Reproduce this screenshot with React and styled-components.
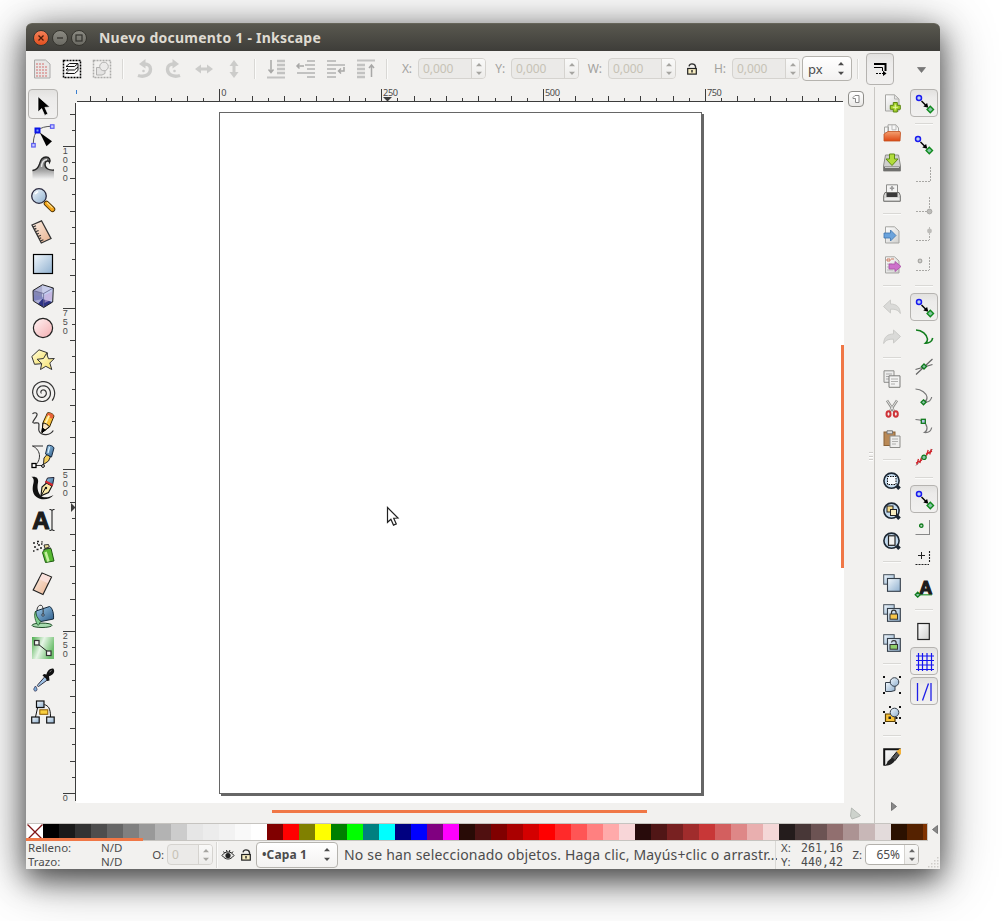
import React from "react";
import styled, { createGlobalStyle, css } from "styled-components";

const Global = createGlobalStyle`
  * { box-sizing: border-box; }
  html, body { margin: 0; padding: 0; background: #fff; }
  body { font-family: "Noto Sans", "Open Sans", sans-serif; color: #4c4c4c; overflow: hidden; }
  svg { display: block; flex: none; overflow: visible; }
`;

const Desktop = styled.main`
  width: 1003px;
  height: 921px;
  padding: 23px 0 0 26px;
  background: #fff;
  overflow: hidden;
`;

const Window = styled.section`
  width: 914px;
  height: 846px;
  display: flex;
  flex-direction: column;
  background: #f2f1ef;
  border-radius: 6px 6px 0 0;
  box-shadow: 0 10px 28px rgba(0, 0, 0, 0.6), 0 8px 56px rgba(0, 0, 0, 0.42);
`;

/* ---------- title bar ---------- */

const TitleBar = styled.header`
  height: 28px;
  flex: none;
  display: flex;
  align-items: center;
  gap: 3px;
  padding-left: 7px;
  border-radius: 6px 6px 0 0;
  background: linear-gradient(#59584f, #3e3d39);
  border-top: 1px solid #66655a;
`;

const WindowButton = styled.span`
  width: 16px;
  height: 16px;
  border-radius: 50%;
  border: 1px solid #36352f;
  background: ${(p) => (p.$close ? "linear-gradient(#f58058, #e2501f)" : "linear-gradient(#8b8a82, #6b6a63)")};
`;

const Title = styled.h1`
  margin: 0 0 0 9px;
  font-size: 14px;
  line-height: 26px;
  font-weight: 700;
  letter-spacing: 0.24px;
  color: #dfdbd2;
  white-space: nowrap;
`;

/* ---------- tool controls bar ---------- */

const ControlBar = styled.div`
  height: 36px;
  flex: none;
  display: flex;
  align-items: center;
  padding: 0 0 1px 1px;
`;

const IconSlot = styled.span`
  width: 30px;
  height: 30px;
  flex: none;
  display: flex;
  align-items: center;
  justify-content: center;
  opacity: ${(p) => p.$fade || 1};
`;

const VSep = styled.i`
  width: 2px;
  height: ${(p) => p.$h || 20}px;
  margin: 0 ${(p) => (p.$tight ? 3 : 5)}px 0 ${(p) => (p.$tight ? 3 : 5)}px;
  flex: none;
  background: linear-gradient(90deg, #d9d8d5 50%, #fbfbfa 50%);
`;

const FieldLabel = styled.label`
  width: ${(p) => p.$w}px;
  padding-right: 6px;
  flex: none;
  text-align: right;
  font-size: 12px;
  letter-spacing: -0.1px;
  color: ${(p) => (p.$on ? "#4c4c4c" : "#a3a29e")};
  white-space: nowrap;
`;

const StatusLabel = styled(FieldLabel)`
  padding-right: 3px;
  font-size: 11.5px;
`;

const SpinBox = styled.span`
  width: ${(p) => p.$w}px;
  height: 21px;
  flex: none;
  display: flex;
  overflow: hidden;
  border-radius: 4px;
  border: 1px solid ${(p) => (p.$on ? "#b3b1ac" : "#d5d3cf")};
  background: ${(p) => (p.$on ? "#fff" : "#ebeae8")};
  color: ${(p) => (p.$on ? "#4c4c4c" : "#c6c2b5")};
  font-size: 12px;
`;

const SpinValue = styled.span`
  flex: 1;
  display: flex;
  align-items: center;
  padding: 0 4px;
  letter-spacing: -0.1px;
  justify-content: ${(p) => (p.$end ? "flex-end" : "flex-start")};
`;

const SpinButtons = styled.span`
  width: 14px;
  display: flex;
  align-items: center;
  justify-content: center;
  border-left: 1px solid #d5d3cf;
  background: linear-gradient(#f9f9f8, #edecea);
  color: ${(p) => (p.$on ? "#666" : "#a6a5a1")};
`;

const Combo = styled.span`
  width: ${(p) => p.$w}px;
  height: ${(p) => p.$h}px;
  margin-left: ${(p) => p.$gap || 0}px;
  flex: none;
  display: flex;
  align-items: center;
  justify-content: space-between;
  padding: 0 7px 0 5px;
  border: 1px solid #b5b3ae;
  border-radius: 4px;
  background: linear-gradient(#fff, #f3f2f1);
  font-size: 13px;
  color: #4c4c4c;
`;

const pressed = css`
  border: 1px solid #b5b3b0;
  border-radius: 4px;
  background: linear-gradient(#e2e1df, #ecebea 30%, #f1f0ef);
`;

const ToggleButton = styled.span`
  width: ${(p) => p.$w}px;
  height: ${(p) => p.$h}px;
  flex: none;
  display: flex;
  align-items: center;
  justify-content: center;
  ${(p) => p.$pressed && pressed}
`;

const ScaleButton = styled(ToggleButton)`
  margin-left: 2px;
`;

const Overflow = styled.span`
  margin-left: auto;
  padding: 3px 14px 0 0;
`;

/* ---------- body ---------- */

const Body = styled.div`
  height: 736px;
  flex: none;
  display: flex;
`;

const Toolbox = styled.nav`
  width: 35px;
  flex: none;
  padding: 2px 0 0 2px;
  display: flex;
  flex-direction: column;
  gap: 2px;
`;

const Workspace = styled.div`
  flex: none;
  display: grid;
  grid-template-columns: 15px 768px 30px;
  grid-template-rows: 15px 701px 20px;
`;

const RulerTop = styled.div`
  grid-column: 1 / 3;
`;

const RulerLeft = styled.div`
  grid-column: 1;
  grid-row: 2;
`;

const RulerSvg = styled.svg`
  fill: #4c4c4c;
`;

const RulerText = styled.text`
  font-family: ${(p) => (p.$stacked ? '"Liberation Sans"' : '"Noto Sans"')}, sans-serif;
  font-size: ${(p) => (p.$stacked ? 9 : 9.2)}px;
  letter-spacing: ${(p) => (p.$stacked ? 0 : -0.4)}px;
`;

const Canvas = styled.div`
  grid-column: 2;
  grid-row: 2;
  position: relative;
  overflow: hidden;
  background: #fff;
`;

const Sheet = styled.div`
  position: absolute;
  left: 143px;
  top: 10px;
  width: 483px;
  height: 682px;
  border: 1px solid #666;
  background: #fff;
  box-shadow: 2px 2px 0 #666;
`;

const Pointer = styled.div`
  position: absolute;
  left: 310px;
  top: 404px;
`;

const VThumb = styled.div`
  position: absolute;
  right: 0;
  top: 243px;
  width: 3px;
  height: 223px;
  background: #f07746;
`;

const HScroll = styled.div`
  grid-column: 2;
  grid-row: 3;
  padding: 7px 0 0 196px;
`;

const HThumb = styled.div`
  width: 375px;
  height: 3px;
  background: #f07746;
`;

const SideStrip = styled.div`
  grid-column: 3;
  grid-row: 1 / 4;
  display: flex;
  flex-direction: column;
  justify-content: space-between;
  padding: 4px 0 3px 4px;
`;

const MiniButton = styled.span`
  width: 16px;
  height: 16px;
  display: flex;
  align-items: center;
  justify-content: center;
  border: 1px solid #8f8e8a;
  border-radius: 4px;
  background: linear-gradient(#fff, #e9e8e6);
`;

const Grip = styled.span`
  width: 4px;
  height: 9px;
  align-self: flex-end;
  margin-right: 1px;
  margin-top: -1px;
  background: repeating-linear-gradient(#cfcdca 0 1px, #fff 1px 2px, transparent 2px 3.6px);
`;

const Dock = styled.aside`
  flex: 1;
  display: flex;
  gap: 2px;
  padding: 1px 1px 0 2px;
  border-left: 1px solid #c9c7c3;
`;

const DockColumn = styled.div`
  width: 30px;
  display: flex;
  flex-direction: column;
  align-items: center;
`;

const DockSlot = styled.span`
  width: 30px;
  height: 30px;
  flex: none;
  display: flex;
  align-items: center;
  justify-content: center;
`;

const HSep = styled.i`
  width: 18px;
  height: 2px;
  margin: 5px 0;
  flex: none;
  background: linear-gradient(#d9d8d5 50%, #fbfbfa 50%);
`;

const DockMore = styled.span`
  margin: auto 0 12px 3px;
`;

/* ---------- palette ---------- */

const Palette = styled.div`
  height: 18px;
  flex: none;
  display: flex;
  align-items: flex-start;
  padding-left: 1px;
  position: relative;
`;

const Swatches = styled.div`
  width: 901px;
  height: 18px;
  display: flex;
  overflow: hidden;
  border: solid #c6c4c0;
  border-width: 1px 1px 1px 0;
`;

const Swatch = styled.span`
  width: 16px;
  height: 16px;
  flex: none;
  background: ${(p) => p.$c};
`;

const PaletteThumb = styled.div`
  position: absolute;
  left: 0;
  bottom: 0;
  width: 117px;
  height: 3px;
  background: #f07746;
`;

const PaletteArrow = styled.span`
  padding: 2px 0 0 4px;
`;

/* ---------- status bar ---------- */

const StatusBar = styled.footer`
  height: 28px;
  flex: none;
  display: flex;
  align-items: center;
  padding: 0 0 1px 2px;
  font-size: 12px;
`;

const StyleGrid = styled.div`
  width: 124px;
  display: grid;
  grid-template-columns: 73px auto;
  line-height: 14px;
  font-size: 11.5px;
`;

const Message = styled.p`
  width: 433px;
  margin: 0 0 0 6px;
  overflow: hidden;
  white-space: nowrap;
  font-size: 14px;
  letter-spacing: 0.19px;
`;

const Coords = styled.div`
  width: 70px;
  margin-left: -2px;
  padding-left: 5px;
  display: grid;
  grid-template-columns: 20px auto;
  line-height: 14px;
  font-size: 11.5px;
  border-left: 1px solid #d9d8d5;
`;

const Mono = styled.span`
  font-family: "DejaVu Sans Mono", monospace;
  font-size: 11.6px;
`;

const LayerName = styled.b`
  font-size: 12px;
  letter-spacing: 0.1px;
`;

const ResizeGrip = styled.span`
  margin: auto 1px 0 auto;
`;

/* ---------- drawings ---------- */

const Svg = ({ s = 24, children, ...rest }) => (
  <svg width={s} height={s} viewBox={`0 0 ${s} ${s}`} fill="none" {...rest}>
    {children}
  </svg>
);

const Defs = styled.svg`
  position: absolute;
`;

const Gradients = () => (
  <Defs width="0" height="0">
    <defs>
      <linearGradient id="blue" x1="0" y1="0" x2="1" y2="1">
        <stop offset="0" stopColor="#f2f8fd" /><stop offset="1" stopColor="#8fb0cf" />
      </linearGradient>
      <linearGradient id="pink" x1="0" y1="0" x2="1" y2="1">
        <stop offset="0" stopColor="#fff4f4" /><stop offset="1" stopColor="#f3adb0" />
      </linearGradient>
      <linearGradient id="sand" x1="0" y1="0" x2="1" y2="1">
        <stop offset="0" stopColor="#fdf0e6" /><stop offset="1" stopColor="#e8b08c" />
      </linearGradient>
      <linearGradient id="yellow" x1="0" y1="0" x2="1" y2="1">
        <stop offset="0" stopColor="#fffde0" /><stop offset="1" stopColor="#f5df60" />
      </linearGradient>
      <linearGradient id="grey" x1="0" y1="0" x2="0" y2="1">
        <stop offset="0" stopColor="#666" /><stop offset=".55" stopColor="#999" /><stop offset="1" stopColor="#f0f0f0" />
      </linearGradient>
      <linearGradient id="paper" x1="0" y1="0" x2="1" y2="1">
        <stop offset="0" stopColor="#fff" /><stop offset="1" stopColor="#cfcfcd" />
      </linearGradient>
      <linearGradient id="green" x1="0" y1="0" x2="1" y2="0.4">
        <stop offset="0" stopColor="#4eae4e" /><stop offset=".5" stopColor="#e6f5e6" /><stop offset="1" stopColor="#6fbf6f" />
      </linearGradient>
      <linearGradient id="steel" x1="0" y1="0" x2="1" y2="1">
        <stop offset="0" stopColor="#9fcdec" /><stop offset="1" stopColor="#2d5c8a" />
      </linearGradient>
      <linearGradient id="orange" x1="0" y1="0" x2="0" y2="1">
        <stop offset="0" stopColor="#f4a070" /><stop offset="1" stopColor="#dd4814" />
      </linearGradient>
    </defs>
  </Defs>
);

const IconLetter = styled.text`
  font-family: "Liberation Sans", sans-serif;
  font-weight: 700;
  font-size: ${(p) => p.$size}px;
  fill: #1c1c1c;
  stroke: #1c1c1c;
  stroke-width: 1.2px;
`;

/* Archimedean spiral, opening clockwise to the lower right */
const spiralPoints = Array.from({ length: 81 }, (_, i) => {
  const t = i / 80;
  const a = (40 - 2.7 * 360 * (1 - t)) * (Math.PI / 180);
  const r = 1.2 + 11.3 * t;
  return `${(11.6 + r * Math.cos(a)).toFixed(1)},${(12.6 + r * Math.sin(a)).toFixed(1)}`;
}).join(" ");

const tools = [
  <Svg key="select"><path d="M7 4.500v15.600l3.700-3.500 3 6.800 3.200-1.500-3-6.500 5-.4z" fill="#000" stroke="#fff" strokeWidth=".7" /></Svg>,
  <Svg key="node">
    <path d="M2.300 19C2.600 13 4 9 6.500 6.500 10 3.300 15 2.500 19.500 2.300" stroke="#555" />
    <rect x="4.500" y="4.500" width="4" height="4" fill="#7fa0ff" stroke="#0a14e6" strokeWidth="2" />
    <rect x=".7" y="19.500" width="3.500" height="3.500" fill="#cdd0ff" stroke="#5d5df0" strokeWidth="1.200" />
    <rect x="19.500" y=".8" width="3.500" height="3.500" fill="#cdd0ff" stroke="#5d5df0" strokeWidth="1.200" />
    <path d="M8.800 8.500 21 17.200l-5.500 5z" fill="#000" />
  </Svg>,
  <Svg key="tweak">
    <path d="M1.500 23V14c4.500-.5 6-2.500 7-6C9.500 3.500 12 1 15 1c3.500 0 5 3 3.500 5.500-1-1.500-3.500-1-4 1.500-.5 3.500 2 6 8.500 6v9z" fill="url(#grey)" />
    <path d="M1.500 14.500c4.500-.5 6-3 7-6.500C9.500 3.500 12 1 15 1c3.600 0 4.800 3 3.500 5.500C18 3.800 14.300 4.500 14 8c-.3 4 3.500 6.500 9 6" stroke="#222" strokeWidth="1.300" />
    <path d="M10.500 11c0-4 2-7.500 5.500-7.500" stroke="#e5e5e5" strokeWidth="1.400" />
  </Svg>,
  <Svg key="zoom">
    <path d="m15.500 15.500 6 5.800" stroke="#4a3000" strokeWidth="5.500" strokeLinecap="round" />
    <path d="m15.500 15.500 6 5.800" stroke="#f2a51c" strokeWidth="3.800" strokeLinecap="round" />
    <path d="m16 14.500 5.500 5.400" stroke="#ffe08a" strokeWidth="1.300" />
    <circle cx="8" cy="8" r="7.300" fill="url(#blue)" stroke="#2b2b40" strokeWidth="1.300" />
    <path d="m4 6 3-2.500" stroke="#fff" strokeWidth="1.500" />
  </Svg>,
  <Svg key="measure">
    <path d="M1 5 10.500.800 20 18.500 10.300 23z" fill="url(#sand)" stroke="#333" strokeWidth="1.300" />
    <path d="m2 7 3-1.300M3.300 9.400l2-1M4.600 11.800l3-1.300M5.800 14.200l2-1M7 16.500l3-1.300M8.200 18.800l2-1M9.400 21l3-1.300" stroke="#333" strokeWidth="1.200" />
  </Svg>,
  <Svg key="rect"><rect x="2.500" y="2.500" width="19" height="19" fill="url(#blue)" stroke="#000" strokeWidth="1.200" /></Svg>,
  <Svg key="box">
    <path d="M2 6.500 11.500.700V15l-9.200 2z" fill="#8487b5" />
    <path d="M11.500.700 22.300 4l-.6 14L11.500 15z" fill="#c3cdf0" />
    <path d="M2.300 6.500 11.500 1l10 3-8.900 5.500z" fill="#c9cce6" opacity=".6" />
    <path d="M2.300 11l10.300 2v10L2.300 17z" fill="#7b80c4" opacity=".6" />
    <path d="M12.600 13.500 11.500 15l10.200 3-9 5.500L7 20z" fill="#2e3385" />
    <path d="m13.500 11 7.500-3.500v8L13.500 19z" fill="#c7a9d8" opacity=".6" />
    <path d="m2 6.500 10.600 3L22.300 4M12.600 9.500v14" stroke="#66668e" strokeWidth=".8" />
    <path d="M2 6.500 11.500.700 22.300 4l-.6 14-9 5.500L2.300 17z" stroke="#222" />
  </Svg>,
  <Svg key="ellipse"><circle cx="12" cy="12" r="9.600" fill="url(#pink)" stroke="#222" strokeWidth="1.200" /></Svg>,
  <Svg key="star">
    <path d="M.8 8.500 8 1.800l8.500 3-1.500 10.500-11.500 1z" fill="url(#yellow)" stroke="#333" />
    <path d="m15.500 5.300 2 5.500 5.800-.3-4.500 4.500 2 6.500-6-3.200-5.300 3.200 1.200-6-4.500-4.200 6.300-.8z" fill="url(#yellow)" stroke="#333" />
  </Svg>,
  <Svg key="spiral"><polyline points={spiralPoints} stroke="#333" strokeWidth="1.200" /></Svg>,
  <Svg key="pencil">
    <path d="M1.500 1.800C4-.2 7 1 5.800 3.500 5 6 1.500 9 1.800 10.500c1 1.500 4.500-.5 5.700.7 1.500 2-.8 5.500.8 8.300 2.500 4.500 11 4 14-1" stroke="#333" strokeWidth="1.200" />
    <path d="M11 20.500 12 10.500 16.500.800c2-.6 6 1 6.500 3.200L18.500 15z" fill="#f8c13a" stroke="#3a2600" />
    <path d="m15.500 3.800 1.400-2.700c2-.4 5.600 1 5.600 3l-1.200 2.800z" fill="#e9633a" />
    <path d="M11 20.500 12 11c2 0 5 1.500 6.300 3.800z" fill="#fbe5c0" stroke="#000" /><path d="m11 20.500.5-4.500 2.800 2z" fill="#000" stroke="#000" />
    <path d="m14.500 11 3.700-7.500" stroke="#fff3b0" strokeWidth="1.800" />
  </Svg>,
  <Svg key="pen">
    <path d="M1 2h11M2 2.300C6 4 8.500 8 8.500 12c0 5-3 9-5.500 9.500h9" stroke="#333" />
    <rect x="1" y="19.500" width="4" height="4" fill="#fff" stroke="#000" strokeWidth="1.300" />
    <circle cx="12" cy="22" r="1.400" fill="#fff" stroke="#000" />
    <path d="m12.500 20.500.5-6.500 3-3.500 3.300 2.500-1.800 4z" fill="#f5cf5a" stroke="#222" />
    <path d="M14.500 10 16.500 1.500c2-1 6 .5 6.500 2.500L20.500 13z" fill="url(#steel)" stroke="#1d2f45" />
    <path d="m17 9 1.500-6" stroke="#d9eefb" strokeWidth="1.300" />
  </Svg>,
  <Svg key="calligraphy">
    <path d="M.5.800C5 0 8 2 7 6.800 6 11 6.500 16 9.500 19.500c3 3 8.500 2 13-.5-3 4.500-12 6-17 2C.5 17 1.500 11 2.500 7 3.200 4 2.500 2 .5.800z" fill="#111" />
    <path d="M10 19.800 11 11l4.500-4 5.500 3-3.500 6.500z" fill="#fbe9a8" stroke="#111" strokeWidth="1.100" />
    <path d="m14.500 6.500 2-4.500 6.500-.5-1.500 8z" fill="url(#steel)" stroke="#223" />
    <path d="m14 6.300 7.500 4 .5-2.300-7-3.500z" fill="#d8262b" />
    <path d="m10.500 19 4-7" stroke="#111" /><circle cx="15" cy="12" r="1.200" fill="#111" />
  </Svg>,
  <Svg key="text">
    <IconLetter x="1.200" y="20.500" $size={24}>A</IconLetter>
    <path d="M18.500 1.500c1.300 0 2 .3 2.500.8.500-.5 1.200-.8 2.500-.8M21 2v20M18.500 22.500c1.300 0 2-.3 2.500-.8.500.5 1.200.8 2.500.8" stroke="#111" />
  </Svg>,
  <Svg key="spray">
    <path d="m11.500 12.500 3-4.500 5.500.5 3 12.500-8.500 1.500z" fill="#57b833" stroke="#1d5a10" />
    <path d="m14.500 12 3 9.500" stroke="#c5f0a0" strokeWidth="2.500" />
    <path d="m12.500 9.500 7.500-1.500M13 5l4.500-.5.800 2.500-4.300 1.500z" fill="#eedc9a" stroke="#333" />
    <path d="M2 3h2M6 1.500h2M3 7h2M7 5h2M10 4h1.500M5.500 9.500h2M2 11h1.500M9 8h2M6 3.500h1M10.500 1.800h1" stroke="#222" strokeWidth="1.700" />
  </Svg>,
  <Svg key="eraser"><path d="m11 1 9.500 4-8.500 17.500-9.800-4.500z" fill="url(#sand)" stroke="#222" strokeWidth="1.200" /><path d="m11.300 1.800 8.400 3.500-3 6-8.400-4z" fill="#fbe3e2" opacity=".8" /></Svg>,
  <Svg key="bucket">
    <ellipse cx="11" cy="21.300" rx="10" ry="2.200" fill="#a8dcb0" stroke="#1f4f28" />
    <path d="m5 7 13.500-4.500c3 1 4.500 7.500 4 12.500L10 17.500C6 15.500 4 11 5 7z" fill="url(#steel)" stroke="#14293c" />
    <path d="M4.700 7c-2 3-1 8 1.500 13.500.5.800 1.500.8 2 0 .2-1 .6-2 1.500-3C6.500 14.500 4.700 11 4.700 7z" fill="#7fcf8e" stroke="#1f4f28" strokeWidth=".8" />
    <path d="M6 6c0-4 4-6.500 5.500-3.500.8 2 .8 5 .5 8" stroke="#333" /><circle cx="12" cy="11" r="1.200" fill="#dfe8f0" stroke="#234" />
  </Svg>,
  <Svg key="gradient">
    <rect x="1" y="1" width="22" height="22" fill="url(#green)" />
    <path d="m7 8 10 8" stroke="#222" />
    <rect x="3.500" y="4.500" width="4.500" height="4.500" fill="#f4f4f4" stroke="#333" strokeWidth="1.200" />
    <rect x="15.500" y="15" width="4.500" height="4.500" fill="#f4f4f4" stroke="#333" strokeWidth="1.200" />
  </Svg>,
  <Svg key="dropper">
    <path d="m14 8.500-7 8c-1 1-.5 2 .5 2l9.500-7z" fill="#9fc3e6" stroke="#334" />
    <path d="M11.500 7.500 13 6l2.500.5C16 3 19.500-.2 22.500.8c2 3-.5 6.500-4.500 7.400l.5 4.300-2.300.5-1.700-3z" fill="#111" />
    <path d="m18.500 4 2-1.500" stroke="#888" />
    <path d="M4.500 18c-1.500 2-2 3.200-1.500 4.300.8 1.300 2.700 1 3-.5.100-1.200-.7-2.300-1.500-3.800z" fill="#7eb0dd" stroke="#335" strokeWidth=".8" />
  </Svg>,
  <Svg key="connector">
    <path d="M6.500 8 4.500 17M13.500 4.500c3.500 1.500 6 3 6 12.500" stroke="#111" />
    <rect x="5.500" y="1" width="7.500" height="6.500" fill="url(#blue)" stroke="#111" strokeWidth="1.200" />
    <rect x="8.800" y="9.800" width="8" height="4.500" fill="#f9cf3e" stroke="#8a5a00" />
    <rect x=".7" y="17" width="7.500" height="6" fill="url(#blue)" stroke="#111" strokeWidth="1.200" />
    <rect x="15.700" y="17" width="7.500" height="6" fill="url(#blue)" stroke="#111" strokeWidth="1.200" />
  </Svg>,
];

const PageShape = () => <path d="M2.500.800h9L16 5v12H2.500z" fill="url(#paper)" stroke="#a5a5a2" />;

const Lens = ({ children }) => (
  <Svg s={18}>
    <path d="m13 13 3.500 3.800" stroke="#1c2733" strokeWidth="3.500" />
    <circle cx="8.500" cy="8.700" r="7.600" fill="#c4dbef" stroke="#1c2733" strokeWidth="1.600" />
    {children}
  </Svg>
);

const Clones = ({ children }) => (
  <Svg s={18}>
    <rect x=".7" y=".7" width="10.500" height="9.500" fill="url(#blue)" stroke="#444f5a" />
    <rect x="4.500" y="4.500" width="12.800" height="12.800" fill="url(#blue)" stroke="#333d48" strokeWidth="1.100" />
    {children}
  </Svg>
);

const Handles = () => <path d="M0 0h2v2H0zM16 0h2v2h-2zM0 16h2v2H0zM16 16h2v2h-2z" fill="#111" />;

const commands = [
  <Svg s={18} key="new"><PageShape /><path d="M11.500.800V5H16" stroke="#b5b5b2" /><path d="M10.300 8.500h4v2.800h3v4h-3V18h-4v-2.700H7.300v-4h3z" fill="#a6d32b" stroke="#5b8410" /><path d="M12.300 10.500v5M9.800 13.300h5" stroke="#e8f8a8" /></Svg>,
  <Svg s={18} key="open"><path d="M5 .800h8L15.500 4v6H5zM1.500 3h4v6h-4z" fill="#f6f6f5" stroke="#a5a5a2" /><path d="M9 .800v5h4V1" stroke="#bbb" /><path d="M1 10 5 7.500h12l.5 1.500-.5 8H1z" fill="url(#orange)" stroke="#c05020" strokeWidth=".8" /></Svg>,
  <Svg s={18} key="save"><path d="M2.500 1h13l2 11v5h-17v-5z" fill="#cfcfcd" stroke="#8d8d8a" /><path d="M.8 12.500h16.500V17H.8z" fill="#6f6f6d" /><path d="M2 13.500h14" stroke="#ccc" /><path d="M6.500 0h5v5H15l-6 6.500L3 5h3.500z" fill="#b2dc3c" stroke="#5f8b14" /></Svg>,
  <Svg s={18} key="print"><path d="M3.500.800h11v8h-11z" fill="#f4f4f3" stroke="#8d8d8a" /><path d="M9 2v4.500M6.800 4.300h4.400" stroke="#999" strokeWidth="1.600" /><path d="M2 8.500h14l1.300 3v5.800H.7v-5.800z" fill="#d9d9d7" stroke="#6f6f6c" /><path d="M3.500 9h11v4h-11z" fill="#3a3a3a" /><path d="M1.500 15h15" stroke="#fff" /></Svg>,
  "-",
  <Svg s={18} key="import"><PageShape /><path d="M1 7h6.500V4l5.500 5.500L7.500 15v-3H1z" fill="#6ba3dc" stroke="#3c74ad" strokeWidth=".8" /></Svg>,
  <Svg s={18} key="export"><PageShape /><path d="M4 3h3v2H4zM8 3h3" stroke="#c97a60" /><path d="M4 8h5M4 11h3M4 14h6" stroke="#bbb" /><path d="M6 8h6V5.500l6 5-6 5V13H6z" fill="#cd72cb" stroke="#a84fa6" strokeWidth=".8" /></Svg>,
  "-",
  <Svg s={18} key="undo"><path d="M7.500 2v4c6 0 9.500 3 9.800 9.500-2-3.500-5-4.500-9.800-4.300V15L.5 8.500z" fill="#dadad8" stroke="#cbcbc8" /></Svg>,
  <Svg s={18} key="redo"><path d="M10.500 2v4C4.500 6 1 9 .700 15.500c2-3.500 5-4.500 9.800-4.300V15l7-6.500z" fill="#dadad8" stroke="#cbcbc8" /></Svg>,
  "-",
  <Svg s={18} key="copy"><path d="M1 .800h10v11.500H1z" fill="#ececeb" stroke="#8d8d8a" /><path d="M3 4h6M3 6.500h3M3 9h3" stroke="#aaa" /><path d="M6 5.800h11v11.500H6z" fill="#f3f3f2" stroke="#7d7d7a" /><path d="M8 9h7M8 11.500h7M8 14h4" stroke="#b0b0ae" /></Svg>,
  <Svg s={18} key="cut"><path d="m4 .5 7.500 11.500M14 .5 6.500 12" stroke="#8e8e8b" strokeWidth="2.500" /><path d="m4 .5 7.500 11M14 .5 6.500 11.500" stroke="#e6e6e4" /><ellipse cx="5.500" cy="14" rx="2" ry="2.800" stroke="#cf3338" strokeWidth="2" /><ellipse cx="12.800" cy="14" rx="2" ry="2.800" stroke="#cf3338" strokeWidth="2" /></Svg>,
  <Svg s={18} key="paste"><rect x="1" y="2" width="11" height="13.500" fill="#b98956" stroke="#8a6237" /><path d="M4 .800h5.500v3H4z" fill="#ddd" stroke="#777" /><path d="M7 6h10v11.500H7z" fill="#efefee" stroke="#8d8d8a" /><path d="M9 9h6M9 11.500h6M9 14h4" stroke="#b0b0ae" /></Svg>,
  "-",
  <Lens key="zsel"><rect x="4.500" y="4.500" width="8.500" height="8" fill="#f7fbff" stroke="#111" strokeDasharray="1.500 1" /></Lens>,
  <Lens key="zdraw"><rect x="4" y="4" width="6" height="6" fill="#f6dd8c" stroke="#222" /><rect x="7.500" y="7.500" width="6" height="6" fill="#f8edc0" stroke="#222" /></Lens>,
  <Lens key="zpage"><rect x="5.500" y="3.800" width="6.500" height="9.500" fill="#f2f2f0" stroke="#222" strokeWidth="1.200" /></Lens>,
  "-",
  <Clones key="dup" />,
  <Clones key="lock"><path d="M8.500 10V8.500a2.300 2.300 0 0 1 4.600 0V10" stroke="#333" strokeWidth="1.200" /><rect x="7" y="10" width="7.500" height="5.200" fill="#f7c548" stroke="#333" /></Clones>,
  <Clones key="unlock"><path d="M8.500 8.500c.3-2.500 4.600-2.500 4.600 0V10" stroke="#333" strokeWidth="1.200" /><rect x="7" y="10.500" width="7.500" height="4.700" fill="#8fcf6a" stroke="#333" /></Clones>,
  "-",
  <Svg s={18} key="group"><path d="M2.500 6.500h9.500v8l-4 1H2.500z" fill="url(#blue)" stroke="#333d48" /><circle cx="11.500" cy="6" r="4.300" fill="url(#blue)" stroke="#333d48" /><Handles /></Svg>,
  <Svg s={18} key="ungroup"><path d="M2.500 8H12v7.500H2.500z" fill="#f9c33a" stroke="#5a3f00" strokeWidth="1.200" /><circle cx="11.500" cy="6.500" r="4.300" fill="url(#blue)" stroke="#333d48" /><path d="M5.500 10.500h2.500v2.500H5.500z" fill="#222" /><path d="M6 0h2v2H6zM16 0h2v2h-2zM12.500 11h2v2h-2zM0 5h2v2H0zM0 16h2v2H0zM12 16h2v2h-2zM16 11h2v2h-2z" fill="#111" /></Svg>,
  "-",
  <Svg s={18} key="fill"><path d="M.7.700h16.600L5 17.300H.7z" fill="url(#paper)" /><path d="M1.200 17.500V1.200h16.500" stroke="#111" strokeWidth="2" /><path d="M0 18c3-1 4-2 4.500-4.500L9 9.500l3 3C9.500 17 4 18 0 18z" fill="#222" /><path d="m9 9.500 5-6 3 2.500-5 6.500z" fill="#555" stroke="#111" /><path d="m13.500 3.500 3.500-3 1 .5v5l-1.500 1z" fill="#f3b23a" /></Svg>,
];

const Green = ({ x, y }) => <path d={`M${x} ${y - 2.5}l2.500 2.500-2.500 2.500-2.500-2.500z`} fill="#86c4a8" stroke="#0f7a1c" strokeWidth="1.300" />;

const SnapPair = ({ d = 0 }) => (
  <Svg s={20}>
    <g transform={`translate(${-d} ${-d})`}>
      <circle cx="5" cy="5" r="2.500" fill="#bcd2f0" stroke="#1a1af0" strokeWidth="1.500" />
      <path d="m7.500 8 4.500 4.500" stroke="#000" strokeWidth="1.400" />
      <path d="m14.300 14.800-5-1.300 3.800-3.600z" fill="#000" />
      <path d="m16.300 13.300 3.200 3.200-3.200 3.200-3.200-3.200z" fill="#86c4a8" stroke="#0f8a1c" strokeWidth="1.400" />
    </g>
  </Svg>
);

const Corner = ({ x = 16, y = 16, top = 2, children }) => (
  <Svg s={20}>
    <path d={`M2 ${y + 0.5}H${x}M${x + 0.5} ${top}V${y}`} stroke="#a9a8a5" strokeDasharray="2 1" />
    {children}
  </Svg>
);

const snaps = [
  [1, <SnapPair key="a" />], "-",
  [0, <SnapPair key="b" d={1} />],
  [0, <Corner key="c" />],
  [0, <Corner key="d" x={15}><circle cx="15.500" cy="16.500" r="2.400" fill="#bdbcb9" stroke="#a9a8a5" /></Corner>],
  [0, <Corner key="e" x={15} y={15}><circle cx="15.500" cy="6" r="2.400" fill="#bdbcb9" /><path d="M15.500 2v8" stroke="#bdbcb9" /></Corner>],
  [0, <Corner key="f" x={15} y={15}><circle cx="6" cy="6" r="1.800" fill="#d3d2cf" stroke="#a9a8a5" strokeWidth="1.300" /></Corner>],
  "-",
  [1, <SnapPair key="g" />],
  [0, <Svg s={20} key="h"><path d="M2 3c6 0 11 4.500 11.500 9 0 1.500-.5 3-2 4.200 3.500.300 6.500-2 7.200-5.200" stroke="#117d1d" strokeWidth="1.600" /></Svg>],
  [0, <Svg s={20} key="i"><path d="M2 17.500 18.500 2M1.500 12.500l17-5" stroke="#666" strokeWidth="1.200" /><Green x={10} y={9.5} /></Svg>],
  [0, <Svg s={20} key="j"><path d="M1.500 2c6 0 11 4.500 11.500 8 .2 2-1 4-2.500 5 3.500.300 6.500-1.500 7.200-5" stroke="#777" strokeWidth="1.200" /><Green x={9.5} y={15.3} /></Svg>],
  [0, <Svg s={20} key="k"><path d="M1.500 2.500c6 0 11 3 11.500 8 .2 2-1 4-2.500 5 3.500.300 6.500-1.500 7.200-5" stroke="#777" strokeWidth="1.200" /><rect x="7.300" y="2.300" width="4" height="4" fill="#b5c8e8" stroke="#0f7a1c" strokeWidth="1.300" /></Svg>],
  [0, <Svg s={20} key="l"><path d="M2 18.500 18.500 2" stroke="#777" /><path d="m2.800 17.500 1.700-5.500M5.800 16l1.700-5.500M2 16l6-3M12.500 8.500 14.200 3M15.700 7.500 17.400 2M12 7.200l6-3" stroke="#d0242b" strokeWidth="1.300" /><circle cx="10" cy="10.300" r="2.200" fill="#86c4a8" stroke="#0f7a1c" strokeWidth="1.200" /></Svg>],
  "-",
  [1, <SnapPair key="m" />],
  [0, <Svg s={20} key="n"><path d="M1.500 15.500H16M15.500 1v15" stroke="#888" /><circle cx="7.300" cy="6.700" r="1.700" fill="#b4dcbc" stroke="#0f7a1c" strokeWidth="1.300" /></Svg>],
  [0, <Svg s={20} key="o"><path d="M1.500 15.500H15M15.500 2v12" stroke="#222" strokeWidth="1.100" strokeDasharray="2 1" /><path d="M7.500 3v7M4 6.500h7" stroke="#222" /></Svg>],
  [0, <Svg s={20} key="p"><path d="M4 15.800h14" stroke="#2b9c36" strokeWidth="1.200" /><IconLetter x="5.300" y="14.500" $size={18}>A</IconLetter><Green x={3.7} y={15.7} /></Svg>],
  "-",
  [0, <Svg s={20} key="q"><rect x="3.800" y="2.500" width="11.500" height="16" fill="url(#paper)" stroke="#222" strokeWidth="1.200" /></Svg>],
  [1, <Svg s={20} key="r"><path d="M4.500 2v18M8.500 2v18M13 2v18M17.500 2v18M2 5h18M2 9.500h18M2 14h18M2 18.500h18" stroke="#1414f0" strokeWidth="1.200" /></Svg>],
  [1, <Svg s={20} key="s"><path d="M3.500 2v18M8.500 19.500 14.500 2.500M17 2v18" stroke="#2020e8" strokeWidth="1.300" /></Svg>],
];

const OpenLock = () => (
  <Svg s={12}>
    <path d="M3 3.300C3.500 1.500 5 .700 6.700 1c2.200.3 3.100 2 2.900 4.500" stroke="#333" strokeWidth="1.300" />
    <rect x="1.700" y="5.500" width="8.600" height="5.600" fill="#f6ecc0" stroke="#222" strokeWidth="1.200" />
    <path d="M6 7v2.500" stroke="#222" strokeWidth="1.400" />
  </Svg>
);

const Eye = () => (
  <Svg s={14}>
    <path d="M1 7.500C3 4.500 5 4 7 4s4 .7 6 3.500C11 10 9 11 7 11S3 10 1 7.500z" fill="#e8e8e6" stroke="#222" />
    <circle cx="7" cy="7.500" r="2.600" fill="#222" />
    <path d="m2.500 3.500 1 1.500M5.500 2l.5 2M8.800 2l-.3 2M12 3.500 10.800 5" stroke="#222" />
  </Svg>
);

const ScaleStroke = () => (
  <Svg s={14}>
    <path d="M1 2h11.500v7" stroke="#000" strokeWidth="2" />
    <path d="M1 5.500h8.500V9" stroke="#000" />
    <path d="M3 11.500h7" stroke="#000" strokeWidth="1.200" strokeDasharray="2 1" />
    <path d="M10 8.800v5.200l3.500-2.600z" fill="#000" />
  </Svg>
);

const Spin = ({ h = 12 }) => (
  <svg width="6" height={h} viewBox={`0 0 6 ${h}`}>
    <path d={`M0 3.200 3 0l3 3.200zM0 ${h - 3.2}l3 3.200 3-3.200z`} fill="currentColor" />
  </svg>
);

const barIcons = [
  [0.5, <Svg s={20} key="1"><path d="M2.500 1h11L18 5v14H2.500z" fill="#ddd" stroke="#666" /><path d="M4 5h9M4 8h12M4 11h12M4 14h12M4 17h12" stroke="#c66" strokeDasharray="2 1" strokeWidth="1.800" /></Svg>],
  [1, <Svg s={20} key="2"><rect x="1.500" y="1.500" width="17" height="17" fill="#f8f8f8" stroke="#000" strokeWidth="1.500" strokeDasharray="2 1" /><path d="M4 7.500 7.500 4.500H16l-3.500 3zM4 11l2-2M4 11h8.500L16 8M4 14.500l2-2M4 14.500h8.500L16 11.500M16 4.500v7" stroke="#111" /></Svg>],
  [0.33, <Svg s={20} key="3"><rect x="1.500" y="1.500" width="17" height="17" stroke="#222" strokeWidth="1.500" strokeDasharray="2 1" /><path d="M4.500 8.500H13v6l-3 1.500H4.500z" stroke="#333" fill="#ccc" /><circle cx="12" cy="7.500" r="4.300" fill="#ddd" stroke="#333" /></Svg>],
  "-",
  [0.35, <Svg s={20} key="4"><path d="M4 16.500c6 2 12.500-.5 12.500-6.500 0-3-2.500-5-6-5" stroke="#888" strokeWidth="3.400" /><path d="M11.500 0v9.500L5 5z" fill="#888" /><circle cx="9.500" cy="12" r="1.300" fill="#888" /></Svg>],
  [0.35, <Svg s={20} key="5"><path d="M16 16.500c-6 2-12.500-.5-12.500-6.500 0-3 2.500-5 6-5" stroke="#888" strokeWidth="3.400" /><path d="M8.500 0v9.500L15 5z" fill="#888" /><circle cx="10.500" cy="12" r="1.300" fill="#888" /></Svg>],
  [0.35, <Svg s={20} key="6"><path d="m1 10 6-4.500v3h6v-3l6 4.500-6 4.500v-3H7v3z" fill="#888" /></Svg>],
  [0.35, <Svg s={20} key="7"><path d="m10 1-4.500 6h3v6h-3l4.500 6 4.500-6h-3V7h3z" fill="#888" /></Svg>],
  "-",
  [0.38, <Svg s={20} key="8"><path d="M1 17.500h18v2H1z" fill="#777" /><path d="M5 1v12M2.500 10.500 5 13.500l2.500-3" stroke="#333" strokeWidth="1.500" /><path d="M11 2h8M11 6h8M11 10h8M11 14h8" stroke="#777" strokeWidth="2.300" /></Svg>],
  [0.38, <Svg s={20} key="9"><path d="M1 7h7M3.500 4.500 1 7l2.500 2.500" stroke="#333" strokeWidth="1.500" /><path d="M11 2h8M9 6h10M11 10h8M1 14h18M11 18h8" stroke="#777" strokeWidth="2.200" /></Svg>],
  [0.38, <Svg s={20} key="10"><path d="M1 2h9M1 6h18M1 10h9M1 14h9M1 18h9" stroke="#777" strokeWidth="2.200" /><path d="M18 8v4h-5.500M15 9.500 12.500 12l2.500 2.500" stroke="#333" strokeWidth="1.500" /></Svg>],
  [0.38, <Svg s={20} key="11"><path d="M1 .5h18v2H1z" fill="#777" /><path d="M1 6h8M1 10h8M1 14h8M1 18h8" stroke="#777" strokeWidth="2.300" /><path d="M15.500 18V6M13 9l2.500-3L18 9" stroke="#333" strokeWidth="1.500" /></Svg>],
  "-",
];

/* ---------- rulers ---------- */

const tickStart = (n) => (n % 10 === 0 ? 2 : n % 2 === 0 ? 9 : 11);
const hTicks = Array.from({ length: 47 }, (_, i) => i - 8);
const vTicks = Array.from({ length: 43 }, (_, i) => i);

const HorizontalRuler = () => (
  <RulerSvg width="783" height="15">
    <path d="M16 14.500h766" stroke="#3c3c3c" />
    {hTicks.map((n) => {
      const x = Math.round(158.3 + n * 16.19) + 0.5;
      return <path key={n} d={`M${x} ${tickStart(n)}V14`} stroke="#3c3c3c" />;
    })}
    <path d="M15.500 3v4" stroke="#3a7fd0" />
    {[0, 250, 500, 750].map((v, i) => (
      <RulerText key={v} x={160.2 + i * 161.9} y="9">{v}</RulerText>
    ))}
    <path d="M322 10h9l-4.500 4.500z" fill="#3c3c3c" />
  </RulerSvg>
);

const VerticalRuler = () => (
  <RulerSvg width="15" height="701">
    <path d="M14.500 1v698" stroke="#3c3c3c" />
    {vTicks.map((n) => {
      const y = Math.round(690.9 - n * 16.175) + 0.5;
      return <path key={n} d={`M${tickStart(n)} ${y}H14`} stroke="#3c3c3c" />;
    })}
    {["0", "250", "500", "750", "1000"].map((v, i) =>
      v.split("").map((ch, k) => (
        <RulerText $stacked key={v + k} x="1.800" y={Math.round(699 - i * 161.75 + k * 9)}>{ch}</RulerText>
      ))
    )}
    <path d="M10 401v9l4.500-4.500z" fill="#3c3c3c" />
  </RulerSvg>
);

const palette = (
  "000 1a1a1a 333 4d4d4d 666 808080 999 b3b3b3 ccc e6e6e6 ececec f2f2f2 f9f9f9 fff " +
  "800000 f00 808000 ff0 008000 0f0 008080 0ff 000080 00f 800080 f0f " +
  "280b06 501010 800000 a00 d40000 f00 ff2a2a f55 ff8080 ffaaaa f8d6d8 " +
  "280b0b 501616 782121 a02c2c c83737 d35f5f de8787 e9afaf f4d7d7 " +
  "241c1c 483737 6c5353 916f6f ac9393 c8b7b7 e3dbdb 2b1100 552200 803300"
).split(" ");

const NumberField = ({ label, w }) => (
  <>
    <FieldLabel $w={w}>{label}</FieldLabel>
    <SpinBox $w={68}>
      <SpinValue>0,000</SpinValue>
      <SpinButtons><Spin /></SpinButtons>
    </SpinBox>
  </>
);

export default function App() {
  return (
    <Desktop>
      <Global />
      <Gradients />
      <Window>
        <TitleBar>
          <WindowButton $close><Svg s={14}><path d="m4.500 4.500 5 5M9.500 4.500l-5 5" stroke="#4a1c0a" strokeWidth="1.300" /></Svg></WindowButton>
          <WindowButton><Svg s={14}><path d="M4 7h6" stroke="#33322d" strokeWidth="1.300" /></Svg></WindowButton>
          <WindowButton><Svg s={14}><rect x="4" y="4" width="6" height="6" stroke="#33322d" strokeWidth="1.200" /></Svg></WindowButton>
          <Title>Nuevo documento 1 - Inkscape</Title>
        </TitleBar>

        <ControlBar>
          {barIcons.map((it, i) => it === "-" ? <VSep key={i} /> : <IconSlot key={i} $fade={it[0]}>{it[1]}</IconSlot>)}
          <NumberField label="X:" w={25} />
          <NumberField label="Y:" w={25} />
          <NumberField label="W:" w={29} />
          <ToggleButton $w={32} $h={24}><OpenLock /></ToggleButton>
          <NumberField label="H:" w={24} />
          <Combo $w={50} $h={25} $gap={2}><span>px</span><Spin h={13} /></Combo>
          <VSep />
          <ScaleButton $w={28} $h={32} $pressed><ScaleStroke /></ScaleButton>
          <Overflow><svg width="9" height="6"><path d="M.5.500h8l-4 5z" fill="#777" stroke="#666" strokeWidth=".6" /></svg></Overflow>
        </ControlBar>

        <Body>
          <Toolbox>
            {tools.map((t, i) => <ToggleButton key={i} $w={30} $h={30} $pressed={i === 0}>{t}</ToggleButton>)}
          </Toolbox>
          <Workspace>
            <RulerTop><HorizontalRuler /></RulerTop>
            <RulerLeft><VerticalRuler /></RulerLeft>
            <Canvas>
              <Sheet />
              <VThumb />
              <Pointer>
                <svg width="14" height="21"><path d="M1.500 1.500v14.800l3.400-3.100 2.600 5.900 2.800-1.200-2.600-5.700 4.300-.2z" fill="#fff" stroke="#222" strokeWidth="1.200" /></svg>
              </Pointer>
            </Canvas>
            <HScroll><HThumb /></HScroll>
            <SideStrip>
              <MiniButton><Svg s={10}><path d="M2 3.500 4 1.500h4v7H4.500v-4H2z" fill="#fff" stroke="#888" /></Svg></MiniButton>
              <Grip />
              <Svg s={14}><path d="M3.500 2 12.500 9.500 11 10.500 4 13 2.500 10z" fill="#cdd2cc" stroke="#b5b9b4" /></Svg>
            </SideStrip>
          </Workspace>
          <Dock>
            <DockColumn>
              {commands.map((c, i) => c === "-" ? <HSep key={i} /> : <DockSlot key={i}>{c}</DockSlot>)}
              <DockMore><svg width="6" height="9"><path d="M.5.500v8l5-4z" fill="#888" stroke="#666" strokeWidth=".8" /></svg></DockMore>
            </DockColumn>
            <DockColumn>
              {snaps.map((s, i) => s === "-" ? <HSep key={i} /> : (
                <DockSlot key={i}><ToggleButton $w={28} $h={28} $pressed={s[0]}>{s[1]}</ToggleButton></DockSlot>
              ))}
            </DockColumn>
          </Dock>
        </Body>

        <Palette>
          <Swatches>
            <Swatch $c="#fff"><Svg s={16}><path d="m.5.500 15 15M15.500.500l-15 15" stroke="#801515" strokeWidth="1.300" /></Svg></Swatch>
            {palette.map((c, i) => <Swatch key={i} $c={"#" + c} />)}
          </Swatches>
          <PaletteArrow><svg width="6" height="9"><path d="M5.500.500v8l-5-4z" fill="#888" stroke="#666" strokeWidth=".8" /></svg></PaletteArrow>
          <PaletteThumb />
        </Palette>

        <StatusBar>
          <StyleGrid>
            <span>Relleno:</span><span>N/D</span>
            <span>Trazo:</span><span>N/D</span>
          </StyleGrid>
          <StatusLabel $w={15} $on>O:</StatusLabel>
          <SpinBox $w={46}><SpinValue>0</SpinValue><SpinButtons><Spin /></SpinButtons></SpinBox>
          <VSep $h={26} $tight />
          <ToggleButton $w={14} $h={20}><Eye /></ToggleButton>
          <ToggleButton $w={21} $h={20}><OpenLock /></ToggleButton>
          <Combo $w={82} $h={26}><LayerName>•Capa 1</LayerName><Spin h={13} /></Combo>
          <Message>No se han seleccionado objetos. Haga clic, Mayús+clic o arrastr…</Message>
          <Coords>
            <span>X:</span><Mono>261,16</Mono>
            <span>Y:</span><Mono>440,42</Mono>
          </Coords>
          <StatusLabel $w={20} $on>Z:</StatusLabel>
          <SpinBox $w={54} $on><SpinValue $end>65%</SpinValue><SpinButtons $on><Spin /></SpinButtons></SpinBox>
          <ResizeGrip>
            <svg width="11" height="11" fill="#cfcdca"><path d="M9 0h1.500v1.500H9zM6 3h1.500v1.500H6zM9 3h1.500v1.500H9zM3 6h1.500v1.500H3zM6 6h1.500v1.500H6zM9 6h1.500v1.500H9zM0 9h1.500v1.500H0zM3 9h1.500v1.500H3zM6 9h1.500v1.500H6zM9 9h1.500v1.500H9z" /></svg>
          </ResizeGrip>
        </StatusBar>
      </Window>
    </Desktop>
  );
}
